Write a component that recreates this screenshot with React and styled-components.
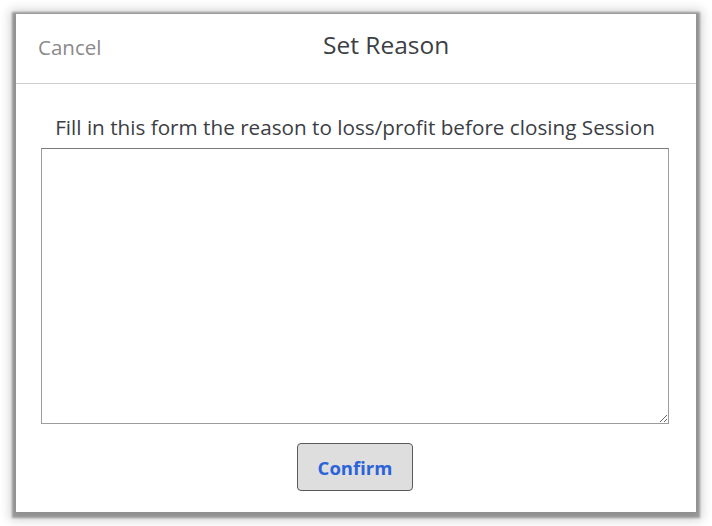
import React from 'react';
import styled, { createGlobalStyle } from 'styled-components';

const GlobalStyle = createGlobalStyle`
  body {
    margin: 0;
    background: #ffffff;
    font-family: "Open Sans", "Liberation Sans", sans-serif;
  }
`;

const Page = styled.div`
  width: 712px;
  height: 526px;
  padding: 14px 16px 0 16px;
  box-sizing: border-box;
`;

const Dialog = styled.div`
  width: 680px;
  height: 498px;
  background: #fff;
  box-shadow: 0 2px 2px 4px rgba(0, 0, 0, 0.32), 0 2px 10px 6px rgba(0, 0, 0, 0.18);
  display: flex;
  flex-direction: column;
`;

const Header = styled.div`
  height: 69px;
  border-bottom: 1px solid #cfcfcf;
  display: flex;
  align-items: center;
  padding: 0 25px 0 22px;
`;

const CancelLink = styled.span`
  font-size: 20.5px;
  color: #8a8a8a;
  margin-top: -3px;
  cursor: pointer;
`;

const Title = styled.div`
  flex: 1;
  text-align: center;
  font-size: 24.5px;
  color: #3c3f45;
  margin-top: -9px;
`;

const Body = styled.div`
  display: flex;
  flex-direction: column;
  align-items: center;
  padding: 30px 27px 0 25px;
`;

const Prompt = styled.p`
  margin: 0 0 8px 0;
  font-size: 20.7px;
  line-height: 26px;
  color: #3b3e44;
  text-align: center;
  white-space: nowrap;
`;

const Reason = styled.textarea`
  width: 628px;
  height: 276px;
  box-sizing: border-box;
  border: 1px solid #9c9c9c;
  border-top-color: #7a7a7a;
  resize: both;
  font-family: inherit;
  font-size: 15px;
  padding: 4px;
  outline: none;
`;

const ConfirmButton = styled.button`
  margin-top: 19px;
  width: 116px;
  height: 48px;
  background: #dedede;
  border: 1px solid #5a5a5a;
  border-radius: 4px;
  font-family: "Open Sans", "Liberation Sans", sans-serif;
  font-weight: 700;
  font-size: 18.5px;
  color: #2b63d9;
  cursor: pointer;
`;

export default function App() {
  return (
    <Page>
      <GlobalStyle />
      <Dialog>
        <Header>
          <CancelLink>Cancel</CancelLink>
          <Title>Set Reason</Title>
        </Header>
        <Body>
          <Prompt>Fill in this form the reason to loss/profit before closing Session</Prompt>
          <Reason />
          <ConfirmButton>Confirm</ConfirmButton>
        </Body>
      </Dialog>
    </Page>
  );
}
